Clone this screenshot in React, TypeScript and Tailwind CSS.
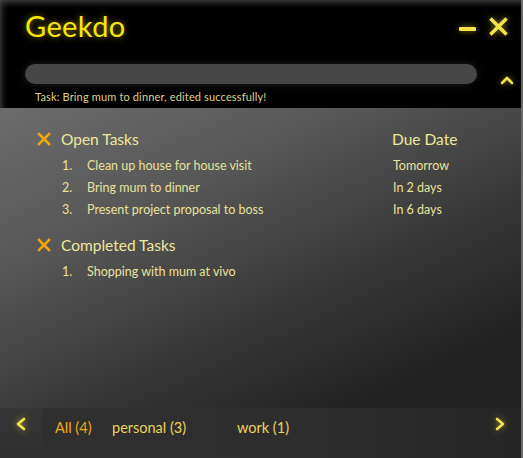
import { useState } from 'react';

const openTasks = [
  { title: 'Clean up house for house visit', due: 'Tomorrow' },
  { title: 'Bring mum to dinner', due: 'In 2 days' },
  { title: 'Present project proposal to boss', due: 'In 6 days' },
];

const completedTasks = [{ title: 'Shopping with mum at vivo' }];

const tabs = [
  { label: 'All (4)', w: 'w-[57px]' },
  { label: 'personal (3)', w: 'w-[125px]' },
  { label: 'work (1)', w: 'w-[80px]' },
];

const CrossIcon = ({ className }: { className?: string }) => (
  <svg viewBox="0 0 14 14" className={className}>
    <path d="M2 2 L12 12 M12 2 L2 12" stroke="currentColor" strokeWidth="2.6" strokeLinecap="square" fill="none" />
  </svg>
);

const Chevron = ({ d, className }: { d: string; className?: string }) => (
  <svg viewBox="0 0 14 14" className={className}>
    <path d={d} stroke="currentColor" strokeWidth="2.6" fill="none" strokeLinecap="round" strokeLinejoin="round" />
  </svg>
);

const glow = '[filter:drop-shadow(0_0_3px_rgba(255,235,40,0.55))]';

const App = () => {
  const [active, setActive] = useState(0);

  return (
    <div className="w-[523px] h-[458px] flex flex-col overflow-hidden bg-black font-['Lato','Open_Sans',sans-serif] border-r-2 border-[#6a6a6a]">
      {/* header */}
      <div className="h-[108px] shrink-0 flex flex-col bg-black shadow-[inset_3px_4px_7px_-2px_rgba(140,140,140,0.55)]">
        <div className="flex items-start justify-between pl-[25px] pr-[13px] pt-[8px] h-[52px]">
          <h1 className="text-[29px] leading-[36px] text-[#f6e60a] [text-shadow:0_0_6px_rgba(255,225,0,0.55)] tracking-[0.4px]">
            Geekdo
          </h1>
          <div className="flex items-center gap-[13px] pt-[9px] text-[#f3e44a]">
            <div className={`w-[17px] h-[4px] bg-[#f3e44a] rounded-[1px] mt-[4px] ${glow}`} />
            <CrossIcon className={`w-[19px] h-[19px] ${glow}`} />
          </div>
        </div>
        <div className="flex items-center pl-[25px] pr-[7px] mt-[9px]">
          <div className="flex-1 h-[20px] rounded-full bg-[#464646] shadow-[0_0_8px_rgba(60,60,60,0.5)]" />
          <Chevron d="M2 10 L7 5 L12 10" className={`w-[14px] h-[14px] ml-[23px] mt-[12px] text-[#f3e44a] ${glow}`} />
        </div>
        <p className="pl-[35px] pt-[3px] text-[11px] leading-[14px] text-[#ddd38a] tracking-[0.15px]">
          Task: Bring mum to dinner, edited successfully!
        </p>
      </div>

      {/* body */}
      <div className="flex-1 bg-[linear-gradient(155deg,#6c6c6c_0%,#575757_30%,#363636_62%,#222222_85%,#212121_100%)] pl-[37px] pr-[30px] pt-[21px]">
        <section>
          <div className="flex items-center">
            <CrossIcon className="w-[14px] h-[14px] text-[#f2a60c]" />
            <h2 className="ml-[10px] text-[15.5px] leading-[20px] text-[#efe79e] flex-1">Open Tasks</h2>
            <span className="w-[99px] text-[15.5px] leading-[20px] text-[#efe79e]">Due Date</span>
          </div>
          <ol className="mt-[6px]">
            {openTasks.map((t, i) => (
              <li key={t.title} className="flex h-[22px] items-center text-[12.5px] text-[#e9e29c]">
                <span className="w-[50px] pl-[25px]">{i + 1}.</span>
                <span className="flex-1">{t.title}</span>
                <span className="w-[98px]">{t.due}</span>
              </li>
            ))}
          </ol>
        </section>
        <section className="mt-[14px]">
          <div className="flex items-center">
            <CrossIcon className="w-[14px] h-[14px] text-[#f2a60c]" />
            <h2 className="ml-[10px] text-[15.5px] leading-[20px] text-[#efe79e]">Completed Tasks</h2>
          </div>
          <ol className="mt-[6px]">
            {completedTasks.map((t, i) => (
              <li key={t.title} className="flex h-[22px] items-center text-[12.5px] text-[#e9e29c]">
                <span className="w-[50px] pl-[25px]">{i + 1}.</span>
                <span className="flex-1">{t.title}</span>
              </li>
            ))}
          </ol>
        </section>
      </div>

      {/* footer */}
      <div className="h-[50px] shrink-0 flex bg-[linear-gradient(90deg,#303030_0%,#2d2d2d_60%,#252525_100%)]">
        <button className="w-[42px] flex justify-center pt-[9px] bg-[linear-gradient(180deg,#363636,#303030)] text-[#f3e44a]">
          <Chevron d="M10 2 L4 7 L10 12" className={`w-[14px] h-[14px] ${glow}`} />
        </button>
        <div className="flex-1 flex items-start pt-[10px] pl-[13px] text-[14.5px] leading-[19px]">
          {tabs.map((t, i) => (
            <button
              key={t.label}
              onClick={() => setActive(i)}
              className={`${t.w} text-left ${i === active ? 'text-[#f2a91a]' : 'text-[#ecd35a]'}`}
            >
              {t.label}
            </button>
          ))}
        </div>
        <button className="w-[42px] flex justify-center pt-[9px] text-[#f3e44a]">
          <Chevron d="M4 2 L10 7 L4 12" className={`w-[14px] h-[14px] ${glow}`} />
        </button>
      </div>
    </div>
  );
};

export default App;
